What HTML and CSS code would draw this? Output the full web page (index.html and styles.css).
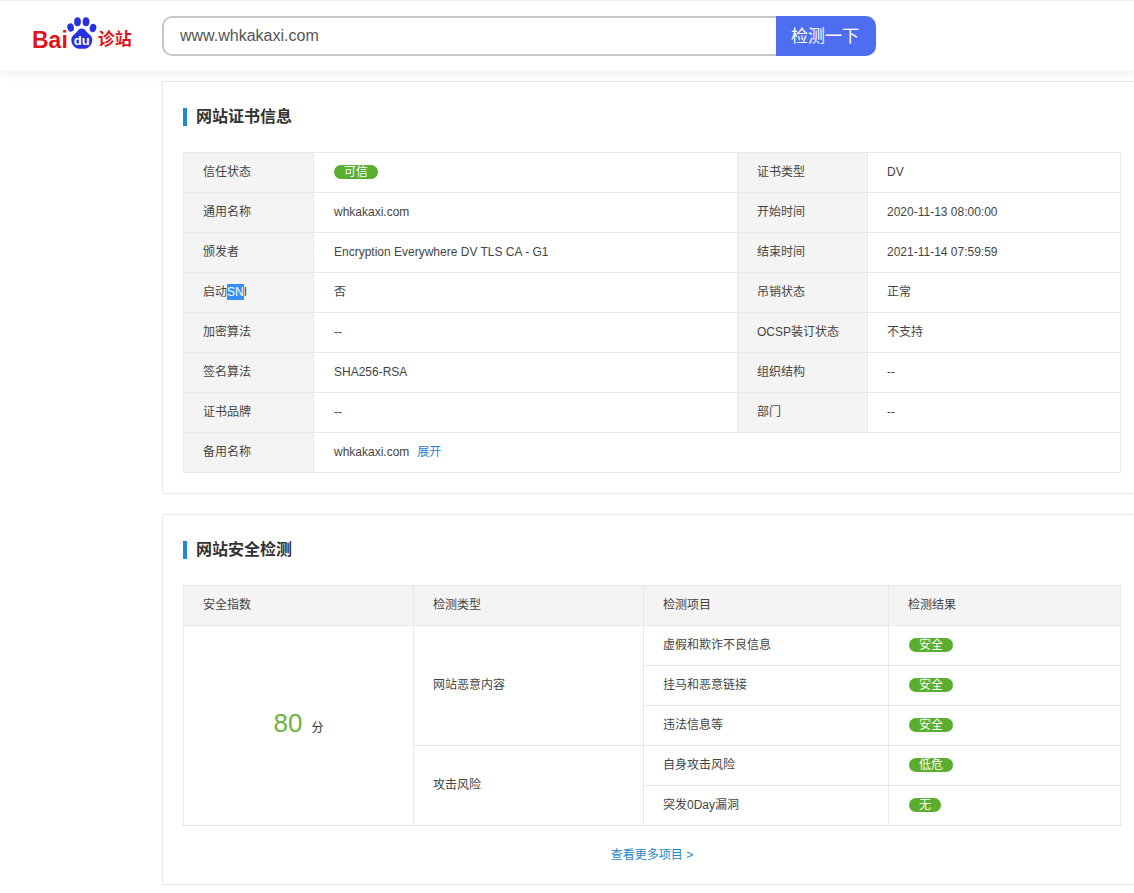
FILE: index.html

```html
<!DOCTYPE html>
<html lang="zh-CN">
<head>
  <meta charset="UTF-8" />
  <title>网站证书信息</title>
  <link rel="stylesheet" href="styles.css">
</head>
<body>
  <div class="header">
    <div class="logo">
      <span class="logo-en">Bai</span>
      <svg class="logo-paw" width="30" height="32" viewBox="0 0 30 32">
        <ellipse cx="3.6" cy="10.5" rx="3.3" ry="4.2" fill="#2932e1" transform="rotate(-15 3.600 10.500)"/>
        <ellipse cx="10.500" cy="4.800" rx="3.400" ry="4.500" fill="#2932e1"/>
        <ellipse cx="19" cy="4.800" rx="3.400" ry="4.500" fill="#2932e1"/>
        <ellipse cx="26" cy="11" rx="3.300" ry="4.200" fill="#2932e1" transform="rotate(15 26 11)"/>
        <path d="M14.800 11.500c-3.300 0-4.300 3.200-6.800 5.200-2.500 1.900-4 3.800-3.700 6.800.4 4.300 3.400 7.900 7.500 8.200h6c4.100-.3 7.100-3.900 7.500-8.200.3-3-1.200-4.900-3.700-6.800-2.500-2-3.500-5.200-6.800-5.200z" fill="#2932e1"/>
        <text class="logo-du" x="14.800" y="28" text-anchor="middle">du</text>
      </svg>
      <span class="logo-cn">诊站</span>
    </div>
    <div class="search">
      <input class="search-input" type="text" value="www.whkakaxi.com">
      <button class="search-btn">检测一下</button>
    </div>
  </div>

  <div class="card card-cert">
    <h3 class="card-title">网站证书信息</h3>
    <table class="info info-cert">
      <colgroup>
        <col class="c130"><col class="c424"><col class="c130"><col>
      </colgroup>
      <tr>
        <th>信任状态</th><td><span class="tag tag-wide">可信</span></td>
        <th>证书类型</th><td class="side">DV</td>
      </tr>
      <tr>
        <th>通用名称</th><td>whkakaxi.com</td>
        <th>开始时间</th><td class="side">2020-11-13 08:00:00</td>
      </tr>
      <tr>
        <th>颁发者</th><td>Encryption Everywhere DV TLS CA - G1</td>
        <th>结束时间</th><td class="side">2021-11-14 07:59:59</td>
      </tr>
      <tr>
        <th>启动<span class="selected">SN</span>I</th><td>否</td>
        <th>吊销状态</th><td class="side">正常</td>
      </tr>
      <tr>
        <th>加密算法</th><td>--</td>
        <th>OCSP装订状态</th><td class="side">不支持</td>
      </tr>
      <tr>
        <th>签名算法</th><td>SHA256-RSA</td>
        <th>组织结构</th><td class="side">--</td>
      </tr>
      <tr>
        <th>证书品牌</th><td>--</td>
        <th>部门</th><td class="side">--</td>
      </tr>
      <tr>
        <th>备用名称</th>
        <td colspan="3">whkakaxi.com<a class="open" href="#">展开</a></td>
      </tr>
    </table>
  </div>

  <div class="card card-safe">
    <h3 class="card-title">网站安全检测</h3>
    <table class="info">
      <colgroup>
        <col class="c230"><col class="c230"><col class="c245"><col>
      </colgroup>
      <tr>
        <th>安全指数</th><th>检测类型</th><th>检测项目</th><th>检测结果</th>
      </tr>
      <tr>
        <td rowspan="5" class="score"><span class="score-num">80</span><span class="score-unit">分</span></td>
        <td rowspan="3" class="side">网站恶意内容</td>
        <td class="side">虚假和欺诈不良信息</td>
        <td><span class="tag">安全</span></td>
      </tr>
      <tr>
        <td class="side">挂马和恶意链接</td><td><span class="tag">安全</span></td>
      </tr>
      <tr>
        <td class="side">违法信息等</td><td><span class="tag">安全</span></td>
      </tr>
      <tr>
        <td rowspan="2" class="side">攻击风险</td>
        <td class="side">自身攻击风险</td><td><span class="tag">低危</span></td>
      </tr>
      <tr>
        <td class="side">突发0Day漏洞</td><td><span class="tag tag-small">无</span></td>
      </tr>
    </table>
    <div class="more"><a href="#">查看更多项目 &gt;</a></div>
  </div>
</body>
</html>
```

FILE: styles.css

```css
* { box-sizing: border-box; }
html, body { overflow-x: hidden; }
body { margin: 0; background: #fff; color: #333; font-family: "Liberation Sans", "Noto Sans CJK SC", sans-serif; font-size: 12px; }
a { text-decoration: none; }

.header { display: flex; align-items: center; height: 71px; padding-top: 1px; border-top: 1px solid #eee; background: #fff; box-shadow: 0 2px 10px rgba(0,0,0,0.08); position: relative; }
.logo { display: flex; align-items: flex-end; width: 162px; height: 32px; margin-top: -7px; padding-left: 32px; }
.logo-en { font-size: 23px; line-height: 18px; font-weight: bold; color: #e0151b; }
.logo-paw { margin: 0 1px 0 -1px; flex: none; }
.logo-du { font-family: "Liberation Sans", sans-serif; font-size: 13px; font-weight: bold; fill: #fff; }
.logo-cn { font-size: 17px; line-height: 18px; font-weight: bold; color: #e0151b; }

.search { display: flex; width: 714px; height: 40px; margin-top: -1px; }
.search-input { width: 614px; height: 40px; padding: 0 16px; border: 2px solid #c4c7ce; border-right: 0; border-radius: 10px 0 0 10px; outline: none; font-family: inherit; font-size: 16px; color: #555; }
.search-btn { width: 100px; height: 40px; padding: 0 2px 3px 0; border: 0; border-radius: 0 10px 10px 0; background: #4e6ef2; color: #fff; font-family: inherit; font-size: 17px; }

.card { width: 1000px; margin-left: 162px; padding: 0 20px; border: 1px solid #e8e8e8; background: #fff; }
.card-cert { height: 413px; margin-top: 10px; }
.card-safe { height: 371px; margin-top: 20px; }
.card-title { height: 18px; margin: 26px 0 26px; padding-left: 9px; border-left: 4px solid #1e88d8; font-size: 16px; line-height: 18px; font-weight: bold; color: #333; }

.info { width: 938px; table-layout: fixed; border-collapse: collapse; }
.info th, .info td { height: 40px; padding: 0 20px 2px; border: 1px solid #e8e8e8; font-weight: normal; text-align: left; color: #444; line-height: 20px; }
.info th { padding-left: 19px; background: #f4f4f4; }
.info .side { padding-left: 19px; }
.c130 { width: 130px; }
.c424 { width: 424px; }
.c230 { width: 230px; }
.c245 { width: 245px; }

.selected { display: inline-block; background: #338fff; color: #fff; line-height: 16px; }
.open { margin-left: 8px; color: #2a80d0; }

.tag { display: inline-block; height: 14px; min-width: 44px; padding: 0 10px; border-radius: 7px; background: #59ae2f; color: #fff; font-size: 12px; line-height: 14px; text-align: center; vertical-align: middle; }
.tag-small { min-width: 32px; }

.info .score { padding: 0 0 6px; text-align: center; }
.score-num { font-size: 26px; line-height: 30px; color: #6cb33e; }
.score-unit { margin-left: 9px; color: #333; }

.more { width: 938px; margin-top: 20px; text-align: center; line-height: 18px; }
.more a { color: #1e87c8; }
```
